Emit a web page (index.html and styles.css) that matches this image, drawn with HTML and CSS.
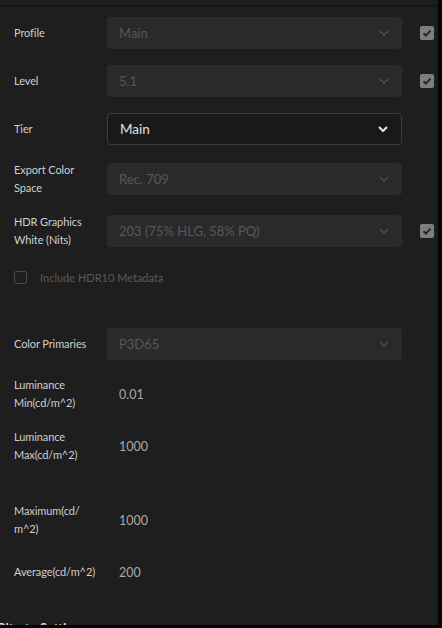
FILE: index.html
```html
<!DOCTYPE html>
<html>
<head>
<meta charset="utf-8">
<link rel="stylesheet" href="styles.css">
</head>
<body>
<div class="panel">
  <div class="form">
    <div class="row">
      <div class="label">Profile</div>
      <div class="select disabled"><span>Main</span><svg class="chev" viewBox="0 0 10 6"><path d="M1 1l4 4 4-4"/></svg></div>
      <div class="check on"><svg viewBox="0 0 14 14"><path d="M3.5 7.2l2.4 2.4 4.6-5"/></svg></div>
    </div>
    <div class="row">
      <div class="label">Level</div>
      <div class="select disabled"><span>5.1</span><svg class="chev" viewBox="0 0 10 6"><path d="M1 1l4 4 4-4"/></svg></div>
      <div class="check on"><svg viewBox="0 0 14 14"><path d="M3.5 7.2l2.4 2.4 4.6-5"/></svg></div>
    </div>
    <div class="row">
      <div class="label">Tier</div>
      <div class="select active"><span>Main</span><svg class="chev" viewBox="0 0 10 6"><path d="M1 1l4 4 4-4"/></svg></div>
    </div>
    <div class="row">
      <div class="label">Export Color<br>Space</div>
      <div class="select disabled"><span>Rec. 709</span><svg class="chev" viewBox="0 0 10 6"><path d="M1 1l4 4 4-4"/></svg></div>
    </div>
    <div class="row">
      <div class="label">HDR Graphics<br>White (Nits)</div>
      <div class="select disabled"><span>203 (75% HLG, 58% PQ)</span><svg class="chev" viewBox="0 0 10 6"><path d="M1 1l4 4 4-4"/></svg></div>
      <div class="check on"><svg viewBox="0 0 14 14"><path d="M3.5 7.2l2.4 2.4 4.6-5"/></svg></div>
    </div>
    <div class="option">
      <div class="check off"></div>
      <span>Include HDR10 Metadata</span>
    </div>
    <div class="row primaries">
      <div class="label">Color Primaries</div>
      <div class="select disabled"><span>P3D65</span><svg class="chev" viewBox="0 0 10 6"><path d="M1 1l4 4 4-4"/></svg></div>
    </div>
    <div class="row">
      <div class="label">Luminance<br>Min(cd/m^2)</div>
      <div class="value">0.01</div>
    </div>
    <div class="row">
      <div class="label">Luminance<br>Max(cd/m^2)</div>
      <div class="value">1000</div>
    </div>
    <div class="row maximum">
      <div class="label">Maximum(cd/<br>m^2)</div>
      <div class="value">1000</div>
    </div>
    <div class="row average">
      <div class="label">Average(cd/m^2)</div>
      <div class="value">200</div>
    </div>
  </div>
  <div class="heading">Bitrate Settings</div>
</div>
</body>
</html>
```

FILE: styles.css
```css
html {
  background: #050505;
  margin: 0;
}
body {
  margin: 0;
  height: 625px;
  overflow: hidden;
  background: #1e1e1e;
  font-family: Lato, "Open Sans", sans-serif;
  border-right: 1px solid #181818;
  width: 437px;
}
.panel {
  margin-top: 5px;
  border-top: 1px solid #0e0e0e;
  padding: 11px 0 0 14px;
}
.form {
  display: flex;
  flex-direction: column;
  gap: 16px;
}
.row {
  display: grid;
  grid-template-columns: 93px 295px auto;
  align-items: center;
  min-height: 32px;
}
.label {
  font-size: 11px;
  line-height: 18px;
  color: #cfcfcf;
  letter-spacing: -0.1px;
}
.select {
  height: 32px;
  box-sizing: border-box;
  border-radius: 4px;
  display: flex;
  align-items: center;
  justify-content: space-between;
  padding: 0 12px 0 12px;
  font-size: 13px;
}
.select.disabled {
  background: #2a2a2a;
  color: #585858;
}
.select.active {
  background: #191919;
  border: 1px solid #3d3d3d;
  color: #e2e2e2;
  padding-left: 12px;
  font-size: 13.5px;
}
.chev {
  width: 10px;
  height: 6px;
  fill: none;
  stroke: #4f4f4f;
  stroke-width: 1.4;
  margin-right: 1px;
}
.select.active .chev {
  stroke: #e6e6e6;
  stroke-width: 2;
}
.check {
  width: 14px;
  height: 14px;
  box-sizing: border-box;
  border-radius: 2px;
  margin-left: 18px;
}
.check svg {
  display: block;
  width: 14px;
  height: 14px;
  fill: none;
  stroke: #222222;
  stroke-width: 2;
}
.check.on {
  background: #7e7e7e;
}
.check.off {
  border: 1.5px solid #4a4a4a;
  margin-left: 0;
  width: 13px;
  height: 13px;
}
.option {
  display: flex;
  align-items: center;
  gap: 13px;
  height: 14px;
  margin-top: 5px;
  font-size: 11px;
  color: #5a5a5a;
}
.primaries {
  margin-top: 28px;
}
.maximum {
  margin-top: 22px;
}
.average {
  margin-top: 2px;
}
.value {
  font-size: 12.5px;
  color: #a9a9a9;
  padding-left: 12px;
}
.heading {
  margin: 32px 0 0 -17px;
  font-size: 13px;
  font-weight: bold;
  color: #d8d8d8;
}
```
